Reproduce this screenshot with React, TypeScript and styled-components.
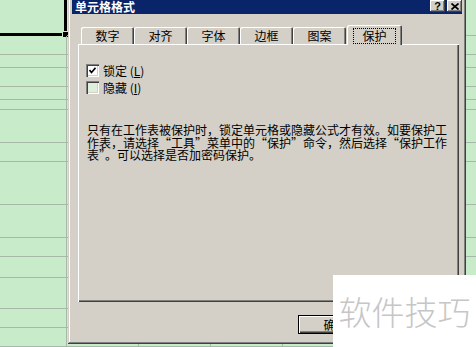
import React from 'react';
import styled, { createGlobalStyle } from 'styled-components';

const GlobalStyle = createGlobalStyle`
  html, body {
    margin: 0;
    padding: 0;
  }
  body {
    width: 476px;
    height: 347px;
    overflow: hidden;
    background: #c8ecca;
    font-family: "Noto Sans CJK SC", "Liberation Sans", sans-serif;
  }
`;

const rowHeights = [36, 19, 13, 19, 13, 10, 33, 19, 43, 33, 19, 21, 31, 19, 19];
const colWidths = [67, 72, 72, 72, 72, 72, 72];

const Page = styled.div`
  position: relative;
  width: 476px;
  height: 347px;
  overflow: hidden;
`;

const Sheet = styled.div`
  display: flex;
  flex-direction: column;
  background: #c8ecca;
`;

const Row = styled.div<{ $h: number }>`
  display: flex;
  height: ${p => p.$h}px;
  flex-shrink: 0;
`;

const Cell = styled.div<{ $w: number; $selected?: boolean }>`
  position: relative;
  box-sizing: border-box;
  width: ${p => p.$w}px;
  flex-shrink: 0;
  border-right: ${p => (p.$selected ? '3px solid #000' : '1px solid #a6b9a8')};
  border-bottom: ${p => (p.$selected ? '3px solid #000' : '1px solid #a6b9a8')};

  ${p =>
    p.$selected &&
    `
    &::after {
      content: '';
      position: absolute;
      right: -5px;
      bottom: -5px;
      width: 5px;
      height: 5px;
      background: #000;
      border: 1px solid #c8ecca;
    }
  `}
`;

const Dialog = styled.div`
  position: absolute;
  left: 68px;
  top: -4px;
  width: 398px;
  height: 348px;
  box-sizing: border-box;
  padding: 4px;
  background: #d4d0c8;
  box-shadow: inset -1px -1px #404040, inset 1px 1px #d4d0c8, inset -2px -2px #808080,
    inset 2px 2px #fff;
  display: flex;
  flex-direction: column;
`;

const TitleBar = styled.div`
  height: 14px;
  background: #0a246a;
  display: flex;
  align-items: flex-start;
  justify-content: space-between;
  padding-left: 3px;
`;

const Title = styled.span`
  color: #fff;
  font-size: 12px;
  font-weight: bold;
  line-height: 14px;
`;

const TitleButtons = styled.div`
  display: flex;
  gap: 2px;
`;

const TitleButton = styled.div`
  width: 15px;
  height: 12px;
  background: #d4d0c8;
  box-shadow: inset -1px -1px #404040, inset 1px 1px #fff, inset -2px -2px #808080;
  display: flex;
  align-items: center;
  justify-content: center;
  font-family: "Liberation Sans", sans-serif;
  font-size: 11px;
  font-weight: bold;
  line-height: 12px;
  color: #000;
`;

const TabRow = styled.div`
  position: relative;
  z-index: 1;
  display: flex;
  align-items: flex-start;
  height: 20px;
  margin-top: 11px;
  padding-left: 9px;
`;

const Tab = styled.div<{ $active?: boolean }>`
  box-sizing: border-box;
  width: ${p => (p.$active ? 55 : 53)}px;
  height: ${p => (p.$active ? 20 : 17)}px;
  margin-top: ${p => (p.$active ? 0 : 2)}px;
  margin-left: ${p => (p.$active ? 1 : 0)}px;
  background: #d4d0c8;
  border-radius: 2px 2px 0 0;
  box-shadow: inset 1px 1px #fff, inset -1px 0 #404040, inset -2px 0 #808080;
  display: flex;
  align-items: ${p => (p.$active ? 'flex-start' : 'center')};
  justify-content: center;
  padding-top: ${p => (p.$active ? 3 : 0)}px;
  font-size: 12px;
  color: #000;
`;

const FocusLabel = styled.span`
  border: 1px dotted #000;
  padding: 0 8px;
  height: 14px;
  line-height: 14px;
`;

const Panel = styled.div`
  box-sizing: border-box;
  width: 381px;
  height: 258px;
  margin-top: -1px;
  margin-left: 6px;
  padding: 18px 8px 0;
  box-shadow: inset 1px 1px #fff, inset -1px -1px #404040, inset -2px -2px #808080;
  display: flex;
  flex-direction: column;
`;

const CheckRow = styled.label`
  display: flex;
  align-items: center;
  height: 17px;
  font-size: 12px;
  color: #000;
`;

const CheckBox = styled.span<{ $tint: string }>`
  box-sizing: border-box;
  width: 13px;
  height: 13px;
  margin-right: 4px;
  background: ${p => p.$tint};
  box-shadow: inset 1px 1px #808080, inset 2px 2px #404040, inset -1px -1px #fff,
    inset -2px -2px #d4d0c8;
  display: flex;
  align-items: center;
  justify-content: center;
`;

const Hint = styled.p`
  margin: 28px 0 0 1px;
  font-size: 12px;
  line-height: 12.5px;
  color: #000;
  white-space: nowrap;
  font-feature-settings: "fwid";

  & > span {
    display: block;
  }
`;

const ButtonRow = styled.div`
  display: flex;
  justify-content: flex-end;
  gap: 6px;
  margin-top: 13px;
  padding-right: 8px;
`;

const PushButton = styled.div<{ $default?: boolean }>`
  box-sizing: border-box;
  width: 75px;
  height: 19px;
  background: #d4d0c8;
  border: ${p => (p.$default ? '1px solid #000' : 'none')};
  box-shadow: inset 1px 1px #fff, inset -1px -1px #404040, inset -2px -2px #808080;
  display: flex;
  align-items: center;
  justify-content: center;
  font-size: 12px;
  color: #000;
`;

const Watermark = styled.div`
  position: absolute;
  right: 0;
  bottom: 0;
  width: 143px;
  height: 72px;
  background: #fff;
  display: flex;
  align-items: center;
  justify-content: center;
  font-size: 33px;
  font-weight: 300;
  color: #c6c6c6;
  letter-spacing: 0;
`;

const tabs = ['数字', '对齐', '字体', '边框', '图案', '保护'];

export default function App() {
  return (
    <Page lang="zh-CN">
      <GlobalStyle />
      <Sheet>
        {rowHeights.map((h, r) => (
          <Row key={r} $h={h}>
            {colWidths.map((w, c) => (
              <Cell key={c} $w={w} $selected={r === 0 && c === 0} />
            ))}
          </Row>
        ))}
      </Sheet>

      <Dialog>
        <TitleBar>
          <Title>单元格格式</Title>
          <TitleButtons>
            <TitleButton>?</TitleButton>
            <TitleButton>
              <svg width="8" height="7" viewBox="0 0 8 7">
                <path d="M0.5 0.5 L7.5 6.5 M7.5 0.5 L0.5 6.5" stroke="#000" strokeWidth="1.7" />
              </svg>
            </TitleButton>
          </TitleButtons>
        </TitleBar>

        <TabRow>
          {tabs.map(t =>
            t === '保护' ? (
              <Tab key={t} $active>
                <FocusLabel>{t}</FocusLabel>
              </Tab>
            ) : (
              <Tab key={t}>{t}</Tab>
            )
          )}
        </TabRow>

        <Panel>
          <CheckRow>
            <CheckBox $tint="#fff">
              <svg width="7" height="7" viewBox="0 0 7 7">
                <path d="M0.5 3 L2.5 5.5 L6.5 0.8" stroke="#000" strokeWidth="1.6" fill="none" />
              </svg>
            </CheckBox>
            锁定 (<u>L</u>)
          </CheckRow>
          <CheckRow>
            <CheckBox $tint="#dcf0dc" />
            隐藏 (<u>I</u>)
          </CheckRow>
          <Hint>
            <span>只有在工作表被保护时，锁定单元格或隐藏公式才有效。如要保护工</span>
            <span>作表，请选择“工具”菜单中的“保护”命令，然后选择“保护工作</span>
            <span>表”。可以选择是否加密码保护。</span>
          </Hint>
        </Panel>

        <ButtonRow>
          <PushButton $default>确定</PushButton>
          <PushButton>取消</PushButton>
        </ButtonRow>
      </Dialog>

      <Watermark>软件技巧</Watermark>
    </Page>
  );
}
